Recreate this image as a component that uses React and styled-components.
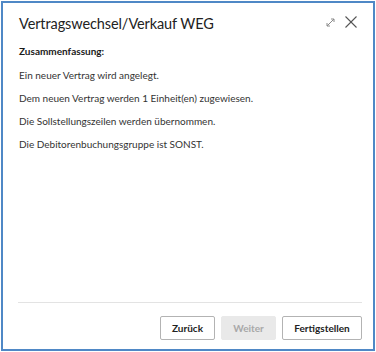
import React from 'react'
import styled, { createGlobalStyle } from 'styled-components'

const GlobalStyle = createGlobalStyle`
    html, body {
        margin: 0;
        padding: 0;
        background: #ffffff;
    }
    body {
        font-family: Lato, "Open Sans", "Liberation Sans", sans-serif;
        color: #262626;
    }
`

const lines = [
    'Ein neuer Vertrag wird angelegt.',
    'Dem neuen Vertrag werden 1 Einheit(en) zugewiesen.',
    'Die Sollstellungszeilen werden übernommen.',
    'Die Debitorenbuchungsgruppe ist SONST.',
]

function App() {
    return (
        <>
            <GlobalStyle />
            <Frame>
                <Header>
                    <Title>Vertragswechsel/Verkauf WEG</Title>
                    <Actions>
                        <IconButton aria-label="Maximieren">
                            <svg width="9" height="9" viewBox="0 0 9 9" fill="none" stroke="#8a8a8a" strokeWidth="1">
                                <path d="M1 8 L8 1" />
                                <path d="M5 1 H8 V4" />
                                <path d="M1 5 V8 H4" />
                            </svg>
                        </IconButton>
                        <IconButton aria-label="Schließen">
                            <svg width="12" height="12" viewBox="0 0 12 12" fill="none" stroke="#555" strokeWidth="1.1">
                                <path d="M0.5 0.5 L11.5 11.5" />
                                <path d="M11.5 0.5 L0.5 11.5" />
                            </svg>
                        </IconButton>
                    </Actions>
                </Header>
                <Body>
                    <Heading>Zusammenfassung:</Heading>
                    {lines.map((l) => (
                        <Line key={l}>{l}</Line>
                    ))}
                </Body>
                <Footer>
                    <Button>Zurück</Button>
                    <Button disabled>Weiter</Button>
                    <Button wide>Fertigstellen</Button>
                </Footer>
            </Frame>
        </>
    )
}

export default App

const Frame = styled.div`
    box-sizing: border-box;
    margin: 1px 0 0 1px;
    width: 374px;
    height: 350px;
    border: 2px solid #4f88c6;
    display: flex;
    flex-direction: column;
    background: #fff;
`

const Header = styled.div`
    display: flex;
    align-items: center;
    justify-content: space-between;
    padding: 5px 16px 0 16px;
    height: 30px;
`

const Title = styled.div`
    font-size: 14.5px;
    color: #222;
    letter-spacing: -0.1px;
`

const Actions = styled.div`
    display: flex;
    align-items: center;
    gap: 9px;
`

const IconButton = styled.div`
    display: flex;
    align-items: center;
    justify-content: center;
    width: 12px;
    height: 14px;
    margin-top: -2px;
`

const Body = styled.div`
    flex: 1;
    padding: 7px 16px 0 16px;
`

const Heading = styled.div`
    font-size: 10px;
    font-weight: 700;
    color: #1a1a1a;
    margin-bottom: 12px;
`

const Line = styled.div`
    font-size: 10px;
    color: #333;
    margin-bottom: 11px;
`

const Footer = styled.div`
    display: flex;
    justify-content: flex-end;
    gap: 6px;
    margin: 0 11px 0 15px;
    padding: 13px 0 9px 0;
    border-top: 1px solid #e3e3e3;
`

const Button = styled.button`
    box-sizing: border-box;
    height: 24px;
    min-width: ${(p) => (p.wide ? '80px' : '55px')};
    padding: 0 10px;
    font-family: inherit;
    font-size: 10px;
    font-weight: 700;
    color: #222;
    background: #fff;
    border: 1px solid #b3b3b3;
    border-radius: 2px;

    &:disabled {
        background: #e9e9e9;
        border-color: #e9e9e9;
        color: #a8a8a8;
    }
`
